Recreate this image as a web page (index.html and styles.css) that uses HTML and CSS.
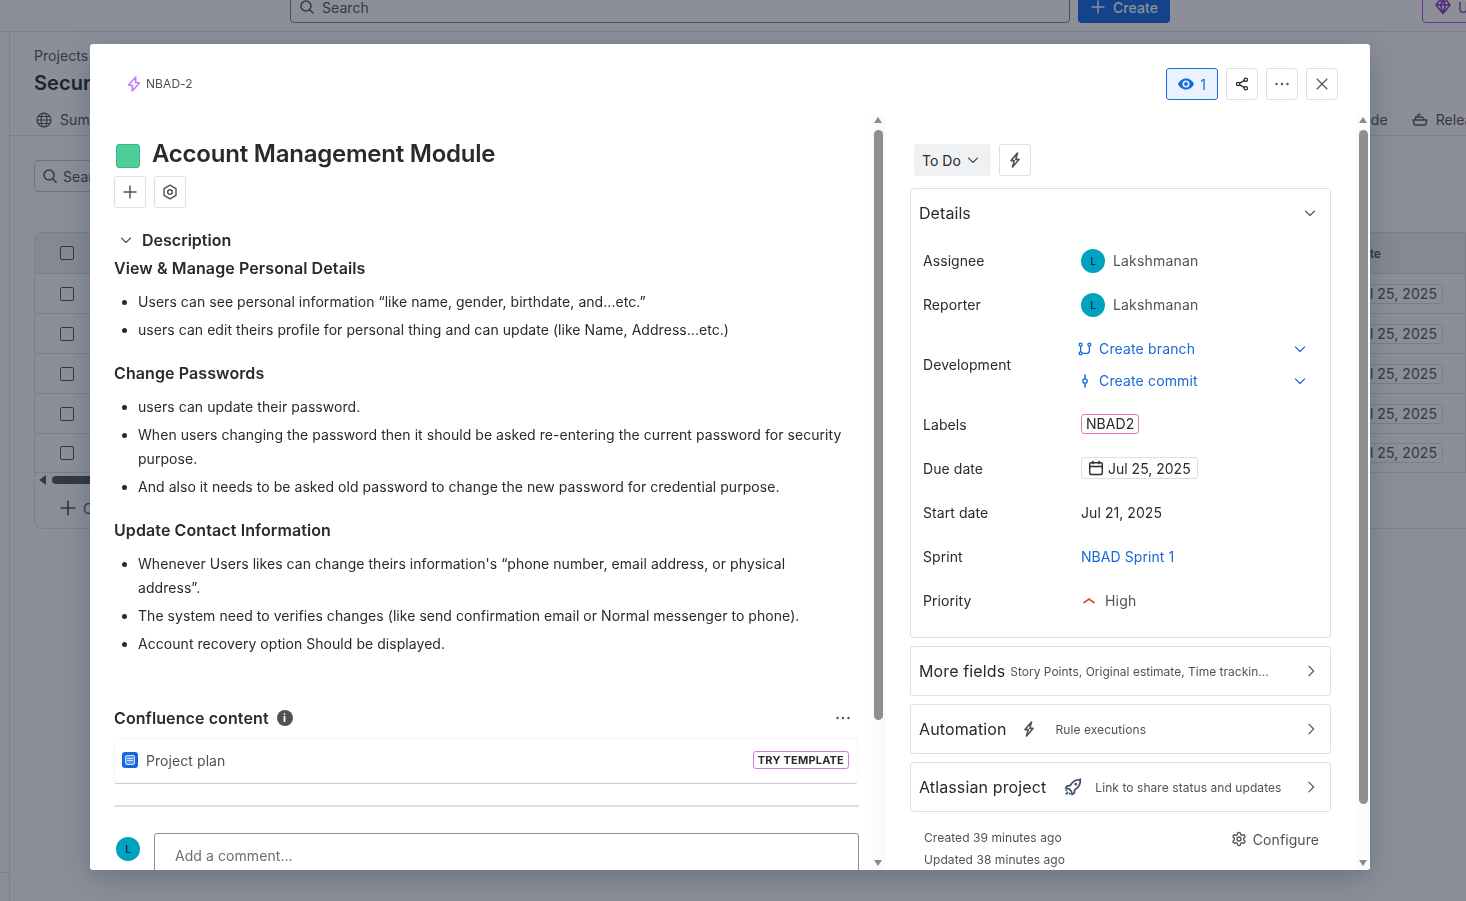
FILE: index.html
```html
<!DOCTYPE html>
<html lang="en">
    <head>
        <meta charset="utf-8" />
        <meta name="viewport" content="width=device-width, initial-scale=1" />
        <title>NBAD-2 Account Management Module</title>
        <link rel="stylesheet" href="styles.css">
    </head>
    <body>

        <svg xmlns="http://www.w3.org/2000/svg" class="sprite">
            <symbol id="i-search" viewBox="0 0 16 16"><circle cx="7" cy="7" r="5" fill="none" stroke="currentColor" stroke-width="1.5"/><path d="M10.7 10.7 14.5 14.5" fill="none" stroke="currentColor" stroke-width="1.5"/></symbol>
            <symbol id="i-plus" viewBox="0 0 16 16"><path d="M8 1.5v13M1.5 8h13" fill="none" stroke="currentColor" stroke-width="1.5"/></symbol>
            <symbol id="i-down" viewBox="0 0 16 16"><path d="M3.5 6 8 10.5 12.5 6" fill="none" stroke="currentColor" stroke-width="1.1" stroke-linecap="round" stroke-linejoin="round"/></symbol>
            <symbol id="i-right" viewBox="0 0 16 16"><path d="M5.5 2.5 11 8l-5.500 5.500" fill="none" stroke="currentColor" stroke-width="1.3" stroke-linecap="round" stroke-linejoin="round"/></symbol>
            <symbol id="i-bolt" viewBox="0 0 16 16"><path d="M10.500 1 4 8.600h3.200M8.800 7.400H12L5.500 15M10.500 1 8.800 7.400M5.500 15l1.700-6.400" fill="none" stroke="currentColor" stroke-width="1.600" stroke-linejoin="round" stroke-linecap="round"/></symbol>
            <symbol id="i-key" viewBox="0 0 16 16"><path d="M9.800 1 2.500 9l4 .6L6.200 15l7.300-8-4-.6z" fill="none" stroke="currentColor" stroke-width="1.600" stroke-linejoin="round"/></symbol>
            <symbol id="i-nut" viewBox="0 0 16 16"><path d="M8 1.200 14 4.600v6.800L8 14.800 2 11.400V4.600z" fill="none" stroke="currentColor" stroke-width="1.400" stroke-linejoin="round"/><circle cx="8" cy="8" r="2.300" fill="none" stroke="currentColor" stroke-width="1.400"/></symbol>
            <symbol id="i-eye" viewBox="0 0 16 16"><path fill-rule="evenodd" d="M8 2.500C4.300 2.500 1.300 5 0 8c1.300 3 4.300 5.500 8 5.500s6.700-2.500 8-5.500c-1.300-3-4.300-5.500-8-5.500zM8 4.500a3.500 3.500 0 1 1 0 7 3.500 3.500 0 0 1 0-7z" fill="currentColor"/><circle cx="8" cy="8" r="1.900" fill="currentColor"/></symbol>
            <symbol id="i-share" viewBox="0 0 16 16"><g fill="none" stroke="currentColor" stroke-width="1.500"><circle cx="12.300" cy="3.200" r="1.900"/><circle cx="12.300" cy="12.800" r="1.900"/><circle cx="3.500" cy="8" r="1.900"/><path d="M5.200 7 10.600 4.100M5.200 9 10.600 11.900"/></g></symbol>
            <symbol id="i-dots" viewBox="0 0 16 16"><circle cx="2.500" cy="8" r="1.200" fill="currentColor"/><circle cx="8" cy="8" r="1.200" fill="currentColor"/><circle cx="13.500" cy="8" r="1.200" fill="currentColor"/></symbol>
            <symbol id="i-close" viewBox="0 0 16 16"><path d="M2 2l12 12M14 2 2 14" fill="none" stroke="currentColor" stroke-width="1.400"/></symbol>
            <symbol id="i-branch" viewBox="0 0 16 16"><g fill="none" stroke="currentColor" stroke-width="1.500"><circle cx="3" cy="3" r="1.700"/><circle cx="3" cy="13" r="1.700"/><circle cx="13" cy="3" r="1.700"/><path d="M3 4.700v6.600M13 4.700V10a3 3 0 0 1-3 3H4.700"/></g></symbol>
            <symbol id="i-commit" viewBox="0 0 16 16"><path d="M8 .5v5M8 10.500v5" fill="none" stroke="currentColor" stroke-width="1.800"/><circle cx="8" cy="8" r="2.500" fill="none" stroke="currentColor" stroke-width="1.500"/></symbol>
            <symbol id="i-cal" viewBox="0 0 16 16"><g fill="none" stroke="currentColor" stroke-width="1.400"><rect x="1.700" y="2.700" width="12.600" height="11.800" rx="1.500"/><path d="M1.700 6.500h12.600M5 .8v3.400M11 .8v3.400"/></g></symbol>
            <symbol id="i-rocket" viewBox="0 0 16 16"><g fill="none" stroke="currentColor" stroke-width="1.600" stroke-linejoin="round"><path d="M14.500 1.500c-4-.2-6.700 1.500-9 5.200L3 7l-1.500 2 3 .7 2 2 .7 3 2-1.500.3-2.500c3.700-2.300 5.400-5 5-9.700z"/><path d="M3.500 12.500l-2 2M5.500 13.500l-1 1M2.500 10.500l-1 1"/></g><circle cx="10.500" cy="5.500" r="1.200" fill="currentColor"/></symbol>
            <symbol id="i-gear" viewBox="0 0 24 24"><path d="M12.220 2h-.44a2 2 0 0 0-2 2v.18a2 2 0 0 1-1 1.730l-.43.250a2 2 0 0 1-2 0l-.15-.08a2 2 0 0 0-2.730.730l-.22.380a2 2 0 0 0 .73 2.730l.15.100a2 2 0 0 1 1 1.720v.510a2 2 0 0 1-1 1.740l-.15.090a2 2 0 0 0-.73 2.730l.22.380a2 2 0 0 0 2.730.730l.15-.08a2 2 0 0 1 2 0l.43.250a2 2 0 0 1 1 1.730V20a2 2 0 0 0 2 2h.44a2 2 0 0 0 2-2v-.18a2 2 0 0 1 1-1.730l.43-.25a2 2 0 0 1 2 0l.15.080a2 2 0 0 0 2.730-.73l.22-.39a2 2 0 0 0-.73-2.730l-.15-.08a2 2 0 0 1-1-1.740v-.5a2 2 0 0 1 1-1.740l.15-.09a2 2 0 0 0 .73-2.730l-.22-.38a2 2 0 0 0-2.730-.73l-.15.080a2 2 0 0 1-2 0l-.43-.25a2 2 0 0 1-1-1.730V4a2 2 0 0 0-2-2z" fill="none" stroke="currentColor" stroke-width="2"/><circle cx="12" cy="12" r="3" fill="none" stroke="currentColor" stroke-width="2"/></symbol>
            <symbol id="i-globe" viewBox="0 0 16 16"><g fill="none" stroke="currentColor" stroke-width="1.200"><circle cx="8" cy="8" r="7"/><ellipse cx="8" cy="8" rx="3" ry="7"/><path d="M1 8h14M2 4.500h12M2 11.500h12"/></g></symbol>
            <symbol id="i-boat" viewBox="0 0 16 16"><g fill="none" stroke="currentColor" stroke-width="1.300" stroke-linejoin="round"><path d="M1 8h14l-1.500 5h-11zM3.500 8V5h7l2 3M6 5V2.500h2.500"/></g></symbol>
            <symbol id="i-gem" viewBox="0 0 16 16"><path d="M4 2h8l3 4-7 8.500L1 6zM1 6h14M5.500 6 8 14.500 10.500 6 8 2 5.500 6" fill="none" stroke="currentColor" stroke-width="1.500" stroke-linejoin="round"/></symbol>
        </svg>

        <div class="back">
            <header class="topbar">
                <div class="top-search"><svg class="ic16"><use href="#i-search"></use></svg> Search</div>
                <div class="top-create"><svg class="ic16"><use href="#i-plus"></use></svg> Create</div>
                <div class="top-upgrade"><svg class="ic16"><use href="#i-gem"></use></svg> Upgrade</div>
            </header>
            <div class="under">
                <div class="rail"></div>
                <main class="project">
                    <p class="crumb">Projects</p>
                    <h1 class="project-name">Security Portal</h1>
                    <nav class="tabs">
                        <span class="tab"><svg class="ic16"><use href="#i-globe"></use></svg> Summary</span>
                        <span class="tab-end">
                            <span class="tab">Code</span>
                            <span class="tab"><svg class="ic16"><use href="#i-boat"></use></svg> Releases</span>
                        </span>
                    </nav>
                    <div class="list-search"><svg class="ic16"><use href="#i-search"></use></svg> Search</div>
                    <section class="issues">
                        <div class="issue-row issue-head"><span class="check"></span><span class="head-date">Due date</span></div>
                        <div class="issue-row"><span class="check"></span><span class="pill">Jul 25, 2025</span></div>
                        <div class="issue-row"><span class="check"></span><span class="pill">Jul 25, 2025</span></div>
                        <div class="issue-row"><span class="check"></span><span class="pill">Jul 25, 2025</span></div>
                        <div class="issue-row"><span class="check"></span><span class="pill">Jul 25, 2025</span></div>
                        <div class="issue-row issue-last"><span class="check"></span><span class="pill">Jul 25, 2025</span></div>
                        <div class="hscroll"><span class="harrow"></span><span class="hthumb"></span></div>
                        <div class="add-row"><svg class="ic18"><use href="#i-plus"></use></svg> Create</div>
                    </section>
                </main>
            </div>
        </div>

        <div class="overlay">
            <div class="modal">
                <div class="modal-top">
                    <div class="issue-key">
                        <svg class="key-icon"><use href="#i-key"></use></svg>
                        <span>NBAD-2</span>
                    </div>
                    <div class="actions">
                        <button class="btn btn-watch"><svg class="ic16"><use href="#i-eye"></use></svg> 1</button>
                        <button class="btn"><svg class="ic14"><use href="#i-share"></use></svg></button>
                        <button class="btn"><svg class="ic16"><use href="#i-dots"></use></svg></button>
                        <button class="btn"><svg class="ic14"><use href="#i-close"></use></svg></button>
                    </div>
                </div>

                <div class="modal-body">
                    <div class="col-left">
                        <div class="title-row">
                            <span class="epic"></span>
                            <h2>Account Management Module</h2>
                        </div>
                        <div class="tools">
                            <button class="tool"><svg class="ic16"><use href="#i-plus"></use></svg></button>
                            <button class="tool"><svg class="ic16"><use href="#i-nut"></use></svg></button>
                        </div>
                        <div class="desc-toggle">
                            <svg class="ic16"><use href="#i-down"></use></svg>
                            <span>Description</span>
                        </div>

                        <h3 class="first">View &amp; Manage Personal Details</h3>
                        <ul>
                            <li>Users can see personal information “like name, gender, birthdate, and...etc.”</li>
                            <li>users can edit theirs profile for personal thing and can update (like Name, Address...etc.)</li>
                        </ul>
                        <h3>Change Passwords</h3>
                        <ul>
                            <li>users can update their password.</li>
                            <li>When users changing the password then it should be asked re-entering the current password for security purpose.</li>
                            <li>And also it needs to be asked old password to change the new password for credential purpose.</li>
                        </ul>
                        <h3>Update Contact Information</h3>
                        <ul>
                            <li>Whenever Users likes can change theirs information's “phone number, email address, or physical address”.</li>
                            <li>The system need to verifies changes (like send confirmation email or Normal messenger to phone).</li>
                            <li>Account recovery option Should be displayed.</li>
                        </ul>

                        <div class="conf-head">
                            <h3>Confluence content</h3>
                            <span class="info">i</span>
                            <svg class="ic16 conf-dots"><use href="#i-dots"></use></svg>
                        </div>
                        <div class="conf-card">
                            <span class="doc"><span class="doc-in"></span></span>
                            <span>Project plan</span>
                            <span class="try">TRY TEMPLATE</span>
                        </div>
                        <hr class="sep">
                        <div class="comment">
                            <span class="avatar">L</span>
                            <div class="comment-box">Add a comment...</div>
                        </div>
                    </div>

                    <div class="bar bar-left"><span class="up"></span><span class="thumb thumb-l"></span><span class="dn"></span></div>

                    <div class="col-right">
                        <div class="status-row">
                            <button class="status">To Do <svg class="ic16"><use href="#i-down"></use></svg></button>
                            <button class="tool"><svg class="ic16"><use href="#i-bolt"></use></svg></button>
                        </div>

                        <section class="details">
                            <div class="details-head">
                                <span>Details</span>
                                <svg class="ic16"><use href="#i-down"></use></svg>
                            </div>
                            <dl class="fields">
                                <dt>Assignee</dt>
                                <dd><span class="avatar">L</span><span class="muted">Lakshmanan</span></dd>
                                <dt>Reporter</dt>
                                <dd><span class="avatar">L</span><span class="muted">Lakshmanan</span></dd>
                                <dt>Development</dt>
                                <dd class="dev">
                                    <a class="dev-link"><svg class="ic14"><use href="#i-branch"></use></svg><span>Create branch</span><svg class="ic16"><use href="#i-down"></use></svg></a>
                                    <a class="dev-link"><svg class="ic14"><use href="#i-commit"></use></svg><span>Create commit</span><svg class="ic16"><use href="#i-down"></use></svg></a>
                                </dd>
                                <dt>Labels</dt>
                                <dd><span class="label">NBAD2</span></dd>
                                <dt>Due date</dt>
                                <dd><span class="due"><svg class="ic16"><use href="#i-cal"></use></svg>Jul 25, 2025</span></dd>
                                <dt>Start date</dt>
                                <dd>Jul 21, 2025</dd>
                                <dt>Sprint</dt>
                                <dd><a class="link">NBAD Sprint 1</a></dd>
                                <dt>Priority</dt>
                                <dd><svg class="prio" viewBox="0 0 16 16"><path d="M2.500 10 8 6l5.500 4" fill="none" stroke="currentColor" stroke-width="1.600"/></svg><span class="muted">High</span></dd>
                            </dl>
                        </section>

                        <div class="fold">
                            <span class="fold-title">More fields</span>
                            <span class="fold-note fold-note-tight">Story Points, Original estimate, Time trackin...</span>
                            <svg class="ic14 fold-arrow"><use href="#i-right"></use></svg>
                        </div>
                        <div class="fold">
                            <span class="fold-title">Automation</span>
                            <svg class="ic16 fold-bolt"><use href="#i-bolt"></use></svg>
                            <span class="fold-note fold-note-rule">Rule executions</span>
                            <svg class="ic14 fold-arrow"><use href="#i-right"></use></svg>
                        </div>
                        <div class="fold">
                            <span class="fold-title">Atlassian project</span>
                            <svg class="ic18 fold-rocket"><use href="#i-rocket"></use></svg>
                            <span class="fold-note fold-note-link">Link to share status and updates</span>
                            <svg class="ic14 fold-arrow"><use href="#i-right"></use></svg>
                        </div>

                        <div class="foot">
                            <div class="stamps">
                                <p>Created 39 minutes ago</p>
                                <p>Updated 38 minutes ago</p>
                            </div>
                            <span class="configure"><svg class="ic16"><use href="#i-gear"></use></svg> Configure</span>
                        </div>
                    </div>

                    <div class="bar bar-right"><span class="up"></span><span class="thumb thumb-r"></span><span class="dn"></span></div>
                </div>
            </div>
        </div>
    </body>
</html>
```

FILE: styles.css
```css
* { margin: 0; padding: 0; box-sizing: border-box; }
html, body { height: 100%; overflow: hidden; }
body { font-family: Inter, "Liberation Sans", sans-serif; font-size: 14px; letter-spacing: .07px; color: #292a2e; background: #fff; }
button { font-family: inherit; color: inherit; background: none; cursor: pointer; }
.sprite { display: none; }

.ic12 { width: 12px; height: 12px; flex: none; }
.ic14 { width: 14px; height: 14px; flex: none; }
.ic16 { width: 16px; height: 16px; flex: none; }
.ic18 { width: 18px; height: 18px; flex: none; }

/* page behind the dialog */
.back { height: 100%; color: #505258; }
.topbar { display: flex; height: 32px; border-bottom: 1px solid #dcdfe4; overflow: hidden; }
.top-search, .top-create, .top-upgrade { display: flex; align-items: center; gap: 7px; height: 32px; margin-top: -9px; border-radius: 4px; flex: none; }
.top-search { width: 780px; margin-left: 290px; padding-left: 8px; border: 1px solid #7a8194; font-size: 14px; }
.top-create { width: 92px; margin-left: 8px; padding-left: 12px; background: #0c66e4; color: #fff; font-weight: 500; }
.top-upgrade { margin-left: 252px; padding-left: 12px; width: 120px; border: 1px solid #a54bd8; color: #8a33c4; }

.under { display: flex; height: 869px; }
.rail { width: 9px; height: 841px; flex: none; border-bottom: 1px solid #dcdfe4; }
.project { flex: 1; min-width: 0; border-left: 1px solid #dcdfe4; padding-top: 15px; }
.crumb { margin-left: 24px; line-height: 17px; }
.project-name { margin-left: 24px; margin-top: 7px; font-size: 20px; line-height: 24px; font-weight: 600; color: #292a2e; white-space: nowrap; }
.tabs { display: flex; align-items: flex-start; margin-top: 16px; height: 25px; border-bottom: 1px solid #dcdfe4; padding-left: 26px; }
.tab { display: inline-flex; align-items: center; gap: 8px; white-space: nowrap; line-height: 18px; }
.tab-end { display: flex; gap: 24px; margin-left: auto; width: 114px; flex: none; }
.list-search { display: flex; align-items: center; gap: 5px; margin: 24px 0 0 24px; width: 200px; height: 32px; padding-left: 7px; border: 1px solid #c1c7d0; border-radius: 4px; }
.issues { margin: 40px 0 0 24px; height: 297px; border: 1px solid #dcdfe4; border-right: 0; border-radius: 8px 0 0 8px; }
.issue-row { display: flex; align-items: center; justify-content: space-between; height: 40px; border-bottom: 1px solid #dcdfe4; border-right: 1px solid #dcdfe4; padding: 0 22px 0 25px; }
.issue-last { height: 39px; }
.issue-head { height: 41px; background: #f1f2f4; font-size: 12px; font-weight: 600; border-radius: 8px 0 0 0; }
.issue-head .head-date { margin-right: 62px; }
.check { width: 14px; height: 14px; border: 1px solid #505258; border-radius: 2px; }
.pill { padding: 0 5px; height: 20px; line-height: 18px; border: 1px solid #dcdfe4; border-radius: 3px; }
.hscroll { display: flex; align-items: center; gap: 6px; height: 14px; padding-left: 4px; }
.harrow { border: 5px solid transparent; border-right: 7px solid #505258; border-left: 0; }
.hthumb { width: 300px; height: 8px; border-radius: 4px; background: #505258; }
.add-row { display: flex; align-items: center; gap: 6px; padding: 12px 0 0 24px; }

/* dialog */
.overlay { position: fixed; inset: 0; display: flex; padding: 44px 96px 31px 90px; background: rgba(25, 31, 50, .5); }
.modal { flex: 1; min-width: 0; display: flex; flex-direction: column; background: #fff; border-radius: 3px; box-shadow: 0 8px 28px rgba(9, 30, 66, .25); overflow: hidden; }
.modal-top { display: flex; justify-content: space-between; align-items: center; height: 70px; padding: 10px 32px 0 36px; flex: none; }
.issue-key { display: flex; align-items: center; gap: 4px; margin-top: -1px; font-size: 12px; color: #505258; }
.key-icon { width: 16px; height: 16px; color: #c97cf4; }
.actions { display: flex; gap: 8px; }
.btn { display: flex; align-items: center; justify-content: center; width: 32px; height: 32px; border: 1px solid #dcdfe4; border-radius: 3px; background: #fff; color: #292a2e; }
.btn:last-child { color: #505258; }
.btn:nth-child(3) { color: #505258; }
.btn-watch { width: 52px; gap: 6px; background: #e9f2fe; border-color: #1868db; color: #1868db; font-size: 14px; }

.modal-body { flex: 1; min-height: 0; display: flex; }
.col-left { width: 745px; margin-left: 24px; flex: none; overflow: hidden; padding-top: 24px; }
.col-right { width: 444px; flex: none; margin-left: 24px; overflow: hidden; padding: 30px 0 0 4px; }

.bar { width: 15px; flex: none; display: flex; flex-direction: column; align-items: center; position: relative; background: #fbfbfb; padding-top: 2px; }
.bar-left { margin-left: 12px; }
.bar-right { margin-left: 2px; width: 14px; }
.up, .dn { position: absolute; left: 3px; border-left: 4.500px solid transparent; border-right: 4.500px solid transparent; }
.bar-right .up, .bar-right .dn { left: 2.500px; }
.up { top: 3px; border-bottom: 6px solid #8a8a8a; }
.dn { bottom: 4px; border-top: 6px solid #8a8a8a; }
.thumb { width: 9px; border-radius: 5px; background: #8f8f8f; margin-top: 14px; }
.thumb-l { height: 590px; }
.thumb-r { height: 674px; }

.title-row { display: flex; align-items: center; gap: 12px; padding-left: 2px; height: 32px; }
.title-row h2 { font-size: 24px; font-weight: 600; line-height: 28px; letter-spacing: -.23px; }
.epic { width: 24px; height: 24px; margin-top: 4px; border-radius: 3px; background: #4bce97; border: 1px solid #3fb585; }
.tools { display: flex; gap: 8px; margin-top: 6px; }
.tool { display: flex; align-items: center; justify-content: center; width: 32px; height: 32px; border: 1px solid #dcdfe4; border-radius: 3px; color: #505258; background: #fff; }

.desc-toggle { display: flex; align-items: center; gap: 8px; padding-left: 4px; margin-top: 21px; height: 22px; font-size: 16px; font-weight: 600; letter-spacing: 0; }
.desc-toggle .ic16 { color: #505258; }
.col-left h3 { font-size: 16px; line-height: 22px; font-weight: 600; letter-spacing: .1px; margin-top: 20px; }
.col-left h3.first { margin-top: 6px; }
ul { width: 732px; margin-top: 11px; padding-left: 24px; list-style: disc; }
li { line-height: 24px; margin-bottom: 4px; letter-spacing: .05px; color: #292a2e; }
li:last-child { margin-bottom: 0; }

.conf-head { display: flex; align-items: center; gap: 8px; margin-top: 50px; height: 24px; }
.col-left .conf-head h3 { margin: 0; }
.info { width: 16px; height: 16px; border-radius: 50%; background: #505258; color: #fff; font-size: 11px; font-weight: 700; text-align: center; line-height: 16px; }
.conf-dots { margin-left: auto; margin-right: 8px; color: #505258; }
.conf-card { display: flex; align-items: center; gap: 8px; margin-top: 8px; width: 744px; height: 46px; padding: 0 8px 2px 7px; border: 1px solid #f4f5f6; border-bottom: 1px solid #c9ccd1; border-radius: 3px; color: #505258; }
.doc { display: flex; align-items: center; justify-content: center; width: 16px; height: 16px; border-radius: 3px; background: #1868db; }
.doc-in { width: 10px; height: 10px; border-radius: 2px; border: 1px solid #cfe1fd; background: linear-gradient(#cfe1fd, #cfe1fd) center 2px / 6px 1px no-repeat, linear-gradient(#cfe1fd, #cfe1fd) center 4px / 6px 1px no-repeat, #5b97ee; }
.try { margin-left: auto; padding: 0 4px; height: 18px; line-height: 16px; font-size: 11px; font-weight: 700; letter-spacing: .2px; border: 1px solid #c97cf4; border-radius: 3px; color: #292a2e; }
.sep { border: 0; height: 2px; background: #dcdfe4; margin-top: 21px; }
.comment { display: flex; gap: 14px; padding-left: 2px; margin-top: 26px; }
.comment .avatar { margin-top: 4px; }
.comment-box { flex: 1; height: 60px; padding: 13px 20px; border: 1px solid #8c8f97; border-radius: 3px; color: #6b6e76; }

.avatar { display: flex; align-items: center; justify-content: center; width: 24px; height: 24px; border-radius: 50%; background: #00a3bf; color: #172b4d; font-size: 10px; font-weight: 600; flex: none; }
.fields .avatar { margin-top: 2px; }

.status-row { display: flex; gap: 8px; height: 32px; align-items: center; }
.status { display: flex; align-items: center; gap: 4px; width: 77px; height: 32px; padding-left: 8px; border: 0; border-radius: 3px; background: #f0f1f2; font-size: 14px; color: #292a2e; }
.status .ic16 { color: #505258; }

.details { width: 421px; height: 450px; margin: 12px 0 0 -4px; border: 1px solid #dcdfe4; border-radius: 3px; }
.details-head { display: flex; justify-content: space-between; align-items: center; height: 48px; padding: 0 12px 0 8px; font-size: 16px; }
.details-head .ic16 { color: #505258; }
.fields { display: grid; grid-template-columns: 158px 1fr; grid-template-rows: 44px 44px 76px 44px 44px 44px 44px 44px; align-items: center; padding: 1px 12px 0 12px; }
.fields dd { display: flex; align-items: center; gap: 8px; }
.fields .dev { flex-direction: column; align-items: stretch; gap: 10px; }
.dev-link { display: flex; align-items: center; gap: 7px; margin-left: -3px; color: #1868db; height: 22px; letter-spacing: .15px; }
.dev-link span { flex: 1; }
.dev-link .ic14 { margin-top: 1px; }
.dev-link .ic16 { margin-right: 10px; margin-top: 1px; }
.muted { color: #505258; letter-spacing: .17px; }
.link { color: #1868db; }
.label { height: 20px; padding: 0 4px; line-height: 18px; border: 1px solid #e774bb; border-radius: 3px; }
.due { display: inline-flex; align-items: center; gap: 4px; height: 22px; padding: 0 6px; border: 1px solid #dcdfe4; border-radius: 3px; letter-spacing: 0; }
.prio { width: 16px; height: 16px; margin-top: 1px; color: #e2483d; }

.fold { display: flex; align-items: center; width: 421px; height: 50px; margin: 8px 0 0 -4px; padding: 0 12px 0 8px; border: 1px solid #dcdfe4; border-radius: 3px; white-space: nowrap; }
.fold-title { font-size: 16px; letter-spacing: .12px; color: #292a2e; }
.fold-note { font-size: 12px; color: #505258; }
.fold-note-tight { margin-left: 5px; letter-spacing: .01px; }
.fold-note-rule { margin-left: 19px; }
.fold-note-link { margin-left: 13px; }
.fold-bolt { margin-left: 14px; color: #505258; }
.fold-rocket { margin-left: 18px; color: #44546f; }
.fold-arrow { margin-left: auto; color: #505258; }

.foot { display: flex; justify-content: space-between; width: 405px; margin-top: 15px; padding-left: 10px; }
.stamps p { font-size: 12px; line-height: 22px; color: #505258; }
.configure { display: flex; align-items: center; gap: 6px; color: #505258; height: 22px; margin-top: 1px; }
```
